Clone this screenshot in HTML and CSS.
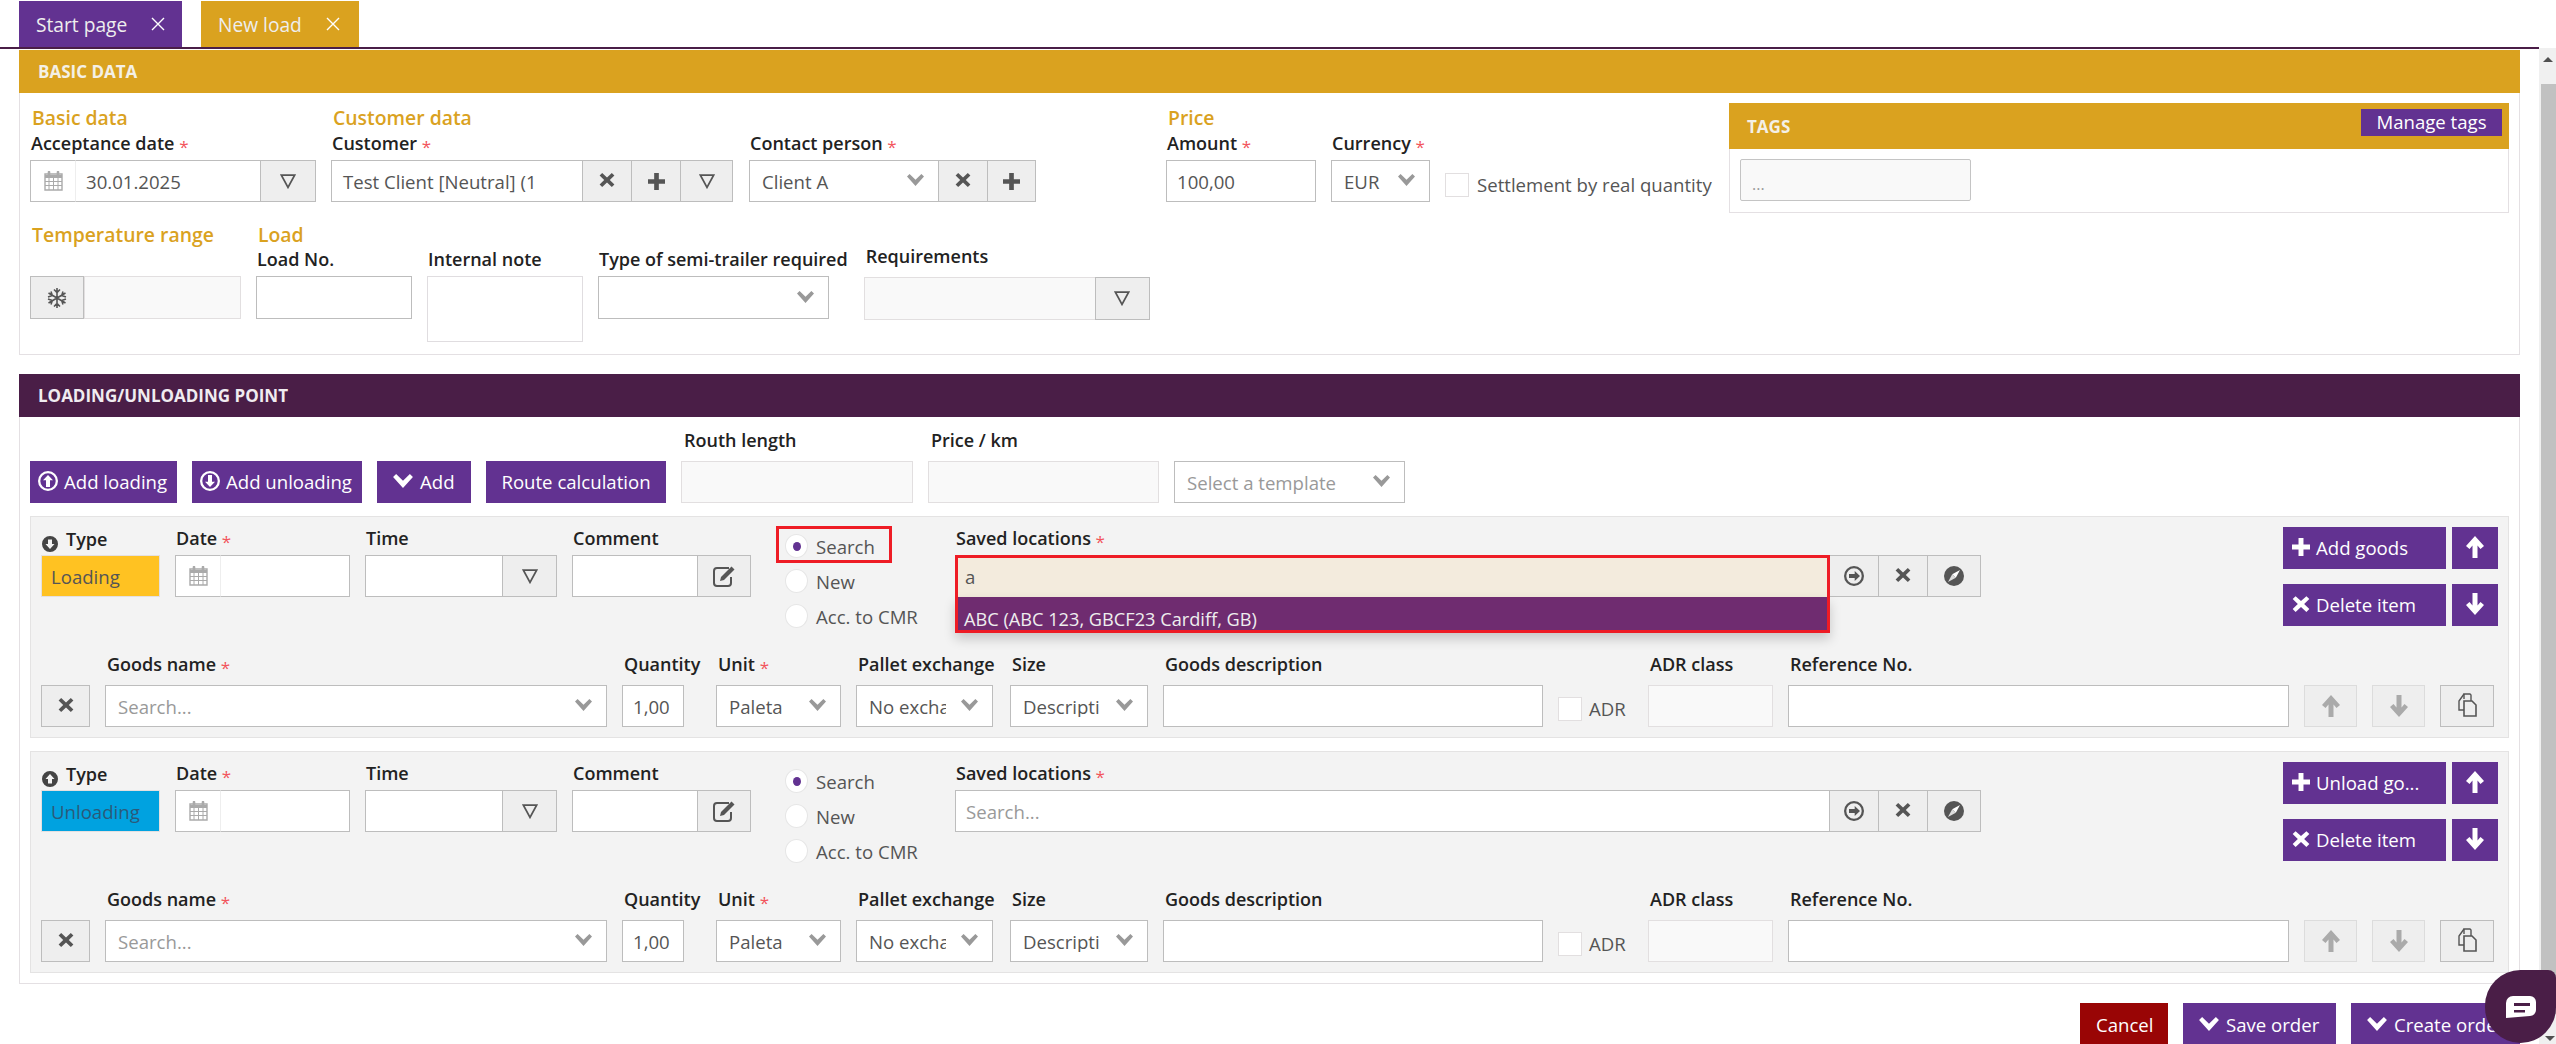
FILE: index.html
```html
<!DOCTYPE html>
<html lang="en">
<head>
<meta charset="utf-8">
<title>New load</title>
<link rel="stylesheet" href="styles.css">
</head>
<body>
<svg class="sprite" xmlns="http://www.w3.org/2000/svg">
  <symbol id="i-x" viewBox="0 0 16 16"><path d="M3.2 1 8 5.400 12.800 1 15.400 3.600 10.800 8 15.400 12.400 12.800 15 8 10.600 3.200 15 .6 12.400 5.200 8 .6 3.600Z" fill="currentColor"/></symbol>
  <symbol id="i-plus" viewBox="0 0 16 16"><path d="M5.800 0h4.400v5.800H16v4.400h-5.800V16H5.800v-5.800H0V5.800h5.800Z" fill="currentColor"/></symbol>
  <symbol id="i-tri" viewBox="0 0 16 15"><path d="M1.400 1.200h13.200L8 13.400Z" fill="none" stroke="currentColor" stroke-width="1.700"/></symbol>
  <symbol id="i-chev" viewBox="0 0 17 12"><path d="M0 2.600 2.600 0 8.500 5.800 14.400 0 17 2.600 8.500 12Z" fill="currentColor"/></symbol>
  <symbol id="i-tabx" viewBox="0 0 14 14"><path d="M1 1 13 13M13 1 1 13" fill="none" stroke="currentColor" stroke-width="1.400"/></symbol>
  <symbol id="i-cal" viewBox="0 0 19 20"><path d="M1 3h17v16H1Z" fill="#fff" stroke="#aaa" stroke-width="1.400"/><path d="M1 4h17v3H1Z" fill="#aaa"/><path d="M5 1v4M14 1v4" stroke="#aaa" stroke-width="2.600" stroke-linecap="round"/><path d="M1 10.500h17M1 14.500h17M5 7v12M9.500 7v12M14 7v12" stroke="#aaa" stroke-width="1"/></symbol>
  <symbol id="i-snow" viewBox="0 0 20 20"><path d="M10 0v20M1.500 5l17 10M18.500 5l-17 10M7 1.500 10 4.500 13 1.500M7 18.500 10 15.500 13 18.500M1 9l4.300-1.500L4 3.500M19 9l-4.300-1.500L16 3.500M1 11l4.300 1.500L4 16.500M19 11l-4.300 1.500L16 16.500" fill="none" stroke="#555" stroke-width="1.600"/></symbol>
  <symbol id="i-cup" viewBox="0 0 20 20"><path fill-rule="evenodd" d="M10 0a10 10 0 1 1 0 20 10 10 0 0 1 0-20Zm0 2.300a7.700 7.700 0 1 0 0 15.400 7.700 7.700 0 0 0 0-15.400ZM10 4l5 5.300h-3V16H8V9.300H5Z" fill="currentColor"/></symbol>
  <symbol id="i-cdown" viewBox="0 0 20 20"><path fill-rule="evenodd" d="M10 0a10 10 0 1 1 0 20 10 10 0 0 1 0-20Zm0 2.300a7.700 7.700 0 1 0 0 15.400 7.700 7.700 0 0 0 0-15.400ZM10 16l-5-5.300h3V4h4v6.700h3Z" fill="currentColor"/></symbol>
  <symbol id="i-sdown" viewBox="0 0 16 16"><path fill-rule="evenodd" d="M8 0a8 8 0 1 1 0 16A8 8 0 0 1 8 0Zm0 13 4.500-5H10V3.500H6V8H3.500Z" fill="currentColor"/></symbol>
  <symbol id="i-sup" viewBox="0 0 16 16"><path fill-rule="evenodd" d="M8 0a8 8 0 1 1 0 16A8 8 0 0 1 8 0Zm0 3L3.500 8H6v4.500h4V8h2.500Z" fill="currentColor"/></symbol>
  <symbol id="i-cright" viewBox="0 0 20 20"><path fill-rule="evenodd" d="M10 0a10 10 0 1 1 0 20 10 10 0 0 1 0-20Zm0 2.300a7.700 7.700 0 1 0 0 15.400 7.700 7.700 0 0 0 0-15.400ZM16 10l-5.300 5v-3H5V8h5.700V5Z" fill="currentColor"/></symbol>
  <symbol id="i-edit" viewBox="0 0 24 24"><path d="M17 4H5a3 3 0 0 0-3 3v12a3 3 0 0 0 3 3h11a3 3 0 0 0 3-3v-6" fill="none" stroke="#555" stroke-width="2"/><path d="M9 13 19.500 2.500l3 3L12 16l-4 1Z" fill="#555"/></symbol>
  <symbol id="i-compass" viewBox="0 0 20 20"><circle cx="10" cy="10" r="10" fill="#555"/><path d="M16 4 11.800 11.800 8.200 8.200Z" fill="#fff"/><path d="M4 16 8.200 8.200 11.800 11.800Z" fill="#ddd"/></symbol>
  <symbol id="i-up" viewBox="0 0 20 22"><path d="M10 0 19 10 15.500 13 12.500 9.500V22H7.500V9.500L4.500 13 1 10Z" fill="currentColor"/></symbol>
  <symbol id="i-down" viewBox="0 0 20 22"><path d="M10 22 19 12 15.500 9 12.500 12.500V0H7.500V12.500L4.500 9 1 12Z" fill="currentColor"/></symbol>
  <symbol id="i-copy" viewBox="0 0 20 24"><path d="M7 6V1h6l1 1v6" fill="none" stroke="#555" stroke-width="1.400"/><path d="M7 1 2 8v9h5" fill="none" stroke="#555" stroke-width="1.400"/><path d="M7 8h8l4 4v11H7Z" fill="#eee" stroke="#555" stroke-width="1.600"/></symbol>
  <symbol id="i-chat" viewBox="0 0 30 22"><path fill-rule="evenodd" d="M7 0h17a6 6 0 0 1 6 6v8a6 6 0 0 1-6 6v0l-24 2V7a7 7 0 0 1 7-7Zm1 7v3h16V7Zm0 7v2.500h11V14Z" fill="#fff"/></symbol>
</svg>

<div class="app">
  <main class="main">
    <nav class="tabs">
      <a class="tab tab-purple"><span>Start page</span><svg class="tabx"><use href="#i-tabx"/></svg></a>
      <a class="tab tab-gold"><span>New load</span><svg class="tabx"><use href="#i-tabx"/></svg></a>
    </nav>

    <section class="panel">
      <h2 class="phead gold">BASIC DATA</h2>
      <div class="basic">
        <div class="basic-left">
          <div class="row row-a">
            <div class="field">
              <div class="title">Basic data</div>
              <label class="label">Acceptance date <i>*</i></label>
              <div class="group w286">
                <span class="addon"><svg class="ic-cal"><use href="#i-cal"/></svg></span>
                <span class="input grow"><span class="val">30.01.2025</span></span>
                <span class="btn w56"><svg class="ic-tri"><use href="#i-tri"/></svg></span>
              </div>
            </div>
            <div class="field">
              <div class="title">Customer data</div>
              <label class="label">Customer <i>*</i></label>
              <div class="group w402">
                <span class="input grow lead"><span class="val">Test Client [Neutral] (1</span></span>
                <span class="btn w50"><svg class="ic-x"><use href="#i-x"/></svg></span>
                <span class="btn w50"><svg class="ic-plus"><use href="#i-plus"/></svg></span>
                <span class="btn w53"><svg class="ic-tri"><use href="#i-tri"/></svg></span>
              </div>
            </div>
            <div class="field">
              <label class="label">Contact person <i>*</i></label>
              <div class="group w287">
                <span class="select grow"><span class="val">Client A</span><svg class="ic-chev"><use href="#i-chev"/></svg></span>
                <span class="btn w50"><svg class="ic-x"><use href="#i-x"/></svg></span>
                <span class="btn w49"><svg class="ic-plus"><use href="#i-plus"/></svg></span>
              </div>
            </div>
            <div class="field ml-amount">
              <div class="title">Price</div>
              <label class="label">Amount <i>*</i></label>
              <span class="input w150"><span class="val">100,00</span></span>
            </div>
            <div class="field">
              <label class="label">Currency <i>*</i></label>
              <span class="select w99"><span class="val">EUR</span><svg class="ic-chev"><use href="#i-chev"/></svg></span>
            </div>
            <div class="check-field">
              <span class="check"></span><span class="check-text">Settlement by real quantity</span>
            </div>
          </div>

          <div class="row row-b">
            <div class="field">
              <div class="title">Temperature range</div>
              <label class="label">&nbsp;</label>
              <div class="group w211 h43">
                <span class="btn w54"><svg class="ic-snow"><use href="#i-snow"/></svg></span>
                <span class="input grow disabled"></span>
              </div>
            </div>
            <div class="field">
              <div class="title">Load</div>
              <label class="label">Load No.</label>
              <span class="input w156 h43"></span>
            </div>
            <div class="field no-title">
              <label class="label">Internal note</label>
              <span class="textarea"></span>
            </div>
            <div class="field no-title">
              <label class="label">Type of semi-trailer required</label>
              <span class="select w231 h43"><svg class="ic-chev"><use href="#i-chev"/></svg></span>
            </div>
            <div class="field req-field">
              <label class="label req-label">Requirements</label>
              <div class="group w286 h43">
                <span class="input grow disabled"></span>
                <span class="btn w55"><svg class="ic-tri"><use href="#i-tri"/></svg></span>
              </div>
            </div>
          </div>
        </div>

        <aside class="tags">
          <div class="tags-head"><span>TAGS</span><a class="manage">Manage tags</a></div>
          <div class="tags-body"><span class="tags-input">...</span></div>
        </aside>
      </div>
    </section>

    <section class="panel panel-2">
      <h2 class="phead plum">LOADING/UNLOADING POINT</h2>
      <div class="points">
        <div class="toolbar">
          <a class="pbtn w147"><svg class="ic-circ"><use href="#i-cup"/></svg>Add loading</a>
          <a class="pbtn w170"><svg class="ic-circ"><use href="#i-cdown"/></svg>Add unloading</a>
          <a class="pbtn w94"><svg class="ic-chev-w"><use href="#i-chev"/></svg>Add</a>
          <a class="pbtn w180 center">Route calculation</a>
          <div class="field">
            <label class="label">Routh length</label>
            <span class="input w232 disabled"></span>
          </div>
          <div class="field">
            <label class="label">Price / km</label>
            <span class="input w231 disabled"></span>
          </div>
          <span class="select w231 placeholder"><span class="val">Select a template</span><svg class="ic-chev"><use href="#i-chev"/></svg></span>
        </div>

        <article class="card">
          <div class="card-top">
            <div class="field w119f">
              <label class="label type-label"><svg class="ic-type"><use href="#i-sdown"/></svg>Type</label>
              <span class="typebox loading">Loading</span>
            </div>
            <div class="field">
              <label class="label">Date <i>*</i></label>
              <div class="group w175">
                <span class="addon"><svg class="ic-cal"><use href="#i-cal"/></svg></span>
                <span class="input grow"></span>
              </div>
            </div>
            <div class="field">
              <label class="label">Time</label>
              <div class="group w192">
                <span class="input grow"></span>
                <span class="btn w55"><svg class="ic-tri"><use href="#i-tri"/></svg></span>
              </div>
            </div>
            <div class="field">
              <label class="label">Comment</label>
              <div class="group w179">
                <span class="input grow"></span>
                <span class="btn w54"><svg class="ic-edit"><use href="#i-edit"/></svg></span>
              </div>
            </div>
            <div class="radios">
              <div class="radio-row hl"><span class="radio on"></span>Search</div>
              <div class="radio-row"><span class="radio"></span>New</div>
              <div class="radio-row"><span class="radio"></span>Acc. to CMR</div>
            </div>
            <div class="field">
              <label class="label lbl-loc">Saved locations <i>*</i></label>
              <div class="group w1029">
                <div class="combo">
                  <span class="input fill active"><span class="val">a</span></span>
                  <div class="menu">ABC (ABC 123, GBCF23 Cardiff, GB)</div>
                  <div class="redbox"></div>
                </div>
                <span class="btn w50"><svg class="ic-circ2"><use href="#i-cright"/></svg></span>
                <span class="btn w50"><svg class="ic-x"><use href="#i-x"/></svg></span>
                <span class="btn w54"><svg class="ic-compass"><use href="#i-compass"/></svg></span>
              </div>
            </div>
            <div class="side">
              <div class="side-row">
                <a class="pbtn w163 h42"><svg class="ic-plus-w"><use href="#i-plus"/></svg>Add goods</a>
                <a class="pbtn w46 h42 center"><svg class="ic-arrow"><use href="#i-up"/></svg></a>
              </div>
              <div class="side-row">
                <a class="pbtn w163 h43"><svg class="ic-plus-w"><use href="#i-x"/></svg>Delete item</a>
                <a class="pbtn w46 h43 center"><svg class="ic-arrow"><use href="#i-down"/></svg></a>
              </div>
            </div>
          </div>
          <div class="card-bottom">
            <span class="btn w49 solo"><svg class="ic-x"><use href="#i-x"/></svg></span>
            <div class="field">
              <label class="label lp">Goods name <i>*</i></label>
              <span class="select w502 placeholder"><span class="val">Search...</span><svg class="ic-chev"><use href="#i-chev"/></svg></span>
            </div>
            <div class="field w79f">
              <label class="label lp">Quantity</label>
              <span class="input w62"><span class="val">1,00</span></span>
            </div>
            <div class="field">
              <label class="label lp">Unit <i>*</i></label>
              <span class="select w125"><span class="val">Paleta</span><svg class="ic-chev"><use href="#i-chev"/></svg></span>
            </div>
            <div class="field w139f">
              <label class="label lp">Pallet exchange</label>
              <span class="select w137"><span class="val clip">No exchange</span><svg class="ic-chev"><use href="#i-chev"/></svg></span>
            </div>
            <div class="field">
              <label class="label lp">Size</label>
              <span class="select w138"><span class="val clip">Description</span><svg class="ic-chev"><use href="#i-chev"/></svg></span>
            </div>
            <div class="field">
              <label class="label lp">Goods description</label>
              <span class="input w380"></span>
            </div>
            <div class="adr"><span class="check"></span><span class="check-text">ADR</span></div>
            <div class="field">
              <label class="label lp">ADR class</label>
              <span class="input w125 disabled"></span>
            </div>
            <div class="field">
              <label class="label lp">Reference No.</label>
              <span class="input w501"></span>
            </div>
            <span class="btn w53 solo dim"><svg class="ic-arrow"><use href="#i-up"/></svg></span>
            <span class="btn w53 solo dim"><svg class="ic-arrow"><use href="#i-down"/></svg></span>
            <span class="btn w54 solo"><svg class="ic-copy"><use href="#i-copy"/></svg></span>
          </div>
        </article>

        <article class="card">
          <div class="card-top">
            <div class="field w119f">
              <label class="label type-label"><svg class="ic-type"><use href="#i-sup"/></svg>Type</label>
              <span class="typebox unloading">Unloading</span>
            </div>
            <div class="field">
              <label class="label">Date <i>*</i></label>
              <div class="group w175">
                <span class="addon"><svg class="ic-cal"><use href="#i-cal"/></svg></span>
                <span class="input grow"></span>
              </div>
            </div>
            <div class="field">
              <label class="label">Time</label>
              <div class="group w192">
                <span class="input grow"></span>
                <span class="btn w55"><svg class="ic-tri"><use href="#i-tri"/></svg></span>
              </div>
            </div>
            <div class="field">
              <label class="label">Comment</label>
              <div class="group w179">
                <span class="input grow"></span>
                <span class="btn w54"><svg class="ic-edit"><use href="#i-edit"/></svg></span>
              </div>
            </div>
            <div class="radios">
              <div class="radio-row"><span class="radio on"></span>Search</div>
              <div class="radio-row"><span class="radio"></span>New</div>
              <div class="radio-row"><span class="radio"></span>Acc. to CMR</div>
            </div>
            <div class="field">
              <label class="label lbl-loc">Saved locations <i>*</i></label>
              <div class="group w1029">
                <div class="combo">
                  <span class="input fill placeholder"><span class="val">Search...</span></span>
                </div>
                <span class="btn w50"><svg class="ic-circ2"><use href="#i-cright"/></svg></span>
                <span class="btn w50"><svg class="ic-x"><use href="#i-x"/></svg></span>
                <span class="btn w54"><svg class="ic-compass"><use href="#i-compass"/></svg></span>
              </div>
            </div>
            <div class="side">
              <div class="side-row">
                <a class="pbtn w163 h42"><svg class="ic-plus-w"><use href="#i-plus"/></svg>Unload go...</a>
                <a class="pbtn w46 h42 center"><svg class="ic-arrow"><use href="#i-up"/></svg></a>
              </div>
              <div class="side-row">
                <a class="pbtn w163 h43"><svg class="ic-plus-w"><use href="#i-x"/></svg>Delete item</a>
                <a class="pbtn w46 h43 center"><svg class="ic-arrow"><use href="#i-down"/></svg></a>
              </div>
            </div>
          </div>
          <div class="card-bottom">
            <span class="btn w49 solo"><svg class="ic-x"><use href="#i-x"/></svg></span>
            <div class="field">
              <label class="label lp">Goods name <i>*</i></label>
              <span class="select w502 placeholder"><span class="val">Search...</span><svg class="ic-chev"><use href="#i-chev"/></svg></span>
            </div>
            <div class="field w79f">
              <label class="label lp">Quantity</label>
              <span class="input w62"><span class="val">1,00</span></span>
            </div>
            <div class="field">
              <label class="label lp">Unit <i>*</i></label>
              <span class="select w125"><span class="val">Paleta</span><svg class="ic-chev"><use href="#i-chev"/></svg></span>
            </div>
            <div class="field w139f">
              <label class="label lp">Pallet exchange</label>
              <span class="select w137"><span class="val clip">No exchange</span><svg class="ic-chev"><use href="#i-chev"/></svg></span>
            </div>
            <div class="field">
              <label class="label lp">Size</label>
              <span class="select w138"><span class="val clip">Description</span><svg class="ic-chev"><use href="#i-chev"/></svg></span>
            </div>
            <div class="field">
              <label class="label lp">Goods description</label>
              <span class="input w380"></span>
            </div>
            <div class="adr"><span class="check"></span><span class="check-text">ADR</span></div>
            <div class="field">
              <label class="label lp">ADR class</label>
              <span class="input w125 disabled"></span>
            </div>
            <div class="field">
              <label class="label lp">Reference No.</label>
              <span class="input w501"></span>
            </div>
            <span class="btn w53 solo dim"><svg class="ic-arrow"><use href="#i-up"/></svg></span>
            <span class="btn w53 solo dim"><svg class="ic-arrow"><use href="#i-down"/></svg></span>
            <span class="btn w54 solo"><svg class="ic-copy"><use href="#i-copy"/></svg></span>
          </div>
        </article>
      </div>
    </section>

    <footer class="actions">
      <a class="abtn cancel">Cancel</a>
      <a class="abtn save"><svg class="ic-chev-w"><use href="#i-chev"/></svg>Save order</a>
      <a class="abtn create"><svg class="ic-chev-w"><use href="#i-chev"/></svg>Create order</a>
    </footer>
  </main>

  <div class="scrollbar">
    <span class="sb-up"></span>
    <span class="sb-thumb"></span>
    <span class="sb-down"></span>
  </div>
  <div class="chat"><svg class="ic-chat"><use href="#i-chat"/></svg></div>
</div>
</body>
</html>
```

FILE: styles.css
```css
* { box-sizing: border-box; }
html, body { margin: 0; height: 100%; overflow: hidden; background: #fff; }
body { font-family: "Open Sans", "Noto Sans", sans-serif; font-size: 18.6px; color: #555; }
.sprite { position: absolute; width: 0; height: 0; }
svg { display: block; flex: none; }
a { cursor: pointer; }

.app { display: flex; height: 1044px; position: relative; overflow: hidden; }
.main { flex: 1; min-width: 0; padding: 0 19px 0 19px; position: relative; }

/* tabs */
.tabs { display: flex; gap: 19px; height: 49px; padding-top: 1px; margin: 0 -19px; padding-left: 19px; border-bottom: 2px solid #4a1e47; }
.tab { display: flex; align-items: center; height: 46px; padding-left: 17px; color: #eee; font-size: 19.2px; }
.tab-purple { width: 163px; background: #623291; }
.tab-gold { width: 158px; background: #daa21f; }
.tabx { width: 14px; height: 14px; margin-left: 24px; color: #fff; }

/* panels */
.panel { border: 1px solid #e4e0e3; border-top: 0; margin-top: 1px; }
.panel-2 { margin-top: 19px; }
.phead { margin: 0 -1px; height: 43px; padding-left: 19px; font-size: 17px; font-weight: 700; line-height: 43px; color: #f4f0e6; }
.gold { background: #daa21f; }
.plum { background: #4a1e47; height: 43px; color: #f0ecf0; }

.basic { display: flex; padding: 0 10px 12px; }
.basic-left { flex: 1; min-width: 0; }
.tags { width: 780px; height: 110px; margin-top: 10px; border: 1px solid #e4e0e3; border-top: 0; align-self: flex-start; flex: none; }
.tags-head { display: flex; align-items: center; justify-content: space-between; height: 46px; margin: 0 -1px; padding: 0 7px 0 18px; background: #daa21f; color: #f4f0e6; font-size: 17px; font-weight: 700; }
.manage { display: block; height: 27px; width: 141px; text-align: center; background: #623291; color: #fff; font-weight: 400; font-size: 18.6px; line-height: 25px; margin-top: -7px; }
.tags-body { padding: 10px; }
.tags-input { display: block; width: 231px; height: 42px; background: #f9f9f9; border: 1px solid #c4c4c4; border-radius: 2px; color: #999; padding: 14px 11px; line-height: 20px; font-size: 16px; }

/* rows */
.row { display: flex; gap: 15px; }
.row-a { align-items: flex-end; padding-top: 15px; }
.row-a .w402 { margin-right: 1px; }
.row-b { align-items: flex-start; padding-top: 23px; }
.field { display: flex; flex-direction: column; flex: none; }
.title { font-size: 19.4px; line-height: 20px; font-weight: 600; color: #daa21f; margin: 0 0 6px 2px; white-space: nowrap; }
.row-b .title { margin-bottom: 5px; }
.label { display: block; height: 20px; line-height: 18px; margin: 0 0 6px 1px; font-size: 18px; font-weight: 600; color: #222; white-space: nowrap; }
.label i { font-style: normal; font-weight: 400; font-size: 17px; color: #f2545b; position: relative; top: 3px; }
.lp { margin: 0 0 10px 2px; }
.ml-amount { margin-left: 115px; }
.no-title { margin-top: 25px; }
.req-field { margin: 22px 0 0 1px; }
.req-label { margin-bottom: 10px; margin-left: 2px; }
.lbl-loc { margin-bottom: 7px; height: 19px; }

/* controls */
.group { display: flex; height: 42px; border: 0; flex: none; }
.input, .select, .btn, .addon { display: flex; align-items: center; height: 100%; border: 1px solid #bdbdbd; background: #fff; }
.input, .select { height: 42px; flex: none; padding: 0 10px; color: #555; white-space: nowrap; }
.group .input, .group .select { height: 100%; }
.grow { flex: 1; min-width: 0; }
.lead { padding-left: 11px; }
.select { justify-content: space-between; padding: 0 14px 0 12px; }
.select .ic-chev { margin-left: auto; }
.val { line-height: 20px; padding-top: 1px; }
.clip { display: block; overflow: hidden; width: 77px; }
.placeholder .val { color: #999; }
.disabled { background: #f9f9f9; border-color: #e2dfe0; }
.fill { width: 100%; }
.textarea { display: block; width: 156px; height: 66px; background: #fff; border: 1px solid #e0dde0; }
.btn { flex: none; justify-content: center; background: #eee; color: #555; margin-left: -1px; }
.group > .btn:first-child { margin-left: 0; }
.addon { width: 46px; flex: none; justify-content: center; border-right: 1px solid #eee; }
.group .addon + .input { border-left: 0; }
.solo { height: 42px; margin-left: 0; }
.dim { color: #aaa; border-color: #dcdcdc; }

.h43 { height: 43px; }
.w49 { width: 49px; } .w50 { width: 50px; } .w53 { width: 53px; } .w54 { width: 54px; } .w55 { width: 55px; } .w56 { width: 56px; }
.w62 { width: 62px; } .w99 { width: 99px; } .w125 { width: 125px; } .w137 { width: 137px; } .w138 { width: 138px; }
.w150 { width: 150px; } .w156 { width: 156px; } .w175 { width: 175px; } .w179 { width: 179px; } .w192 { width: 192px; }
.w211 { width: 211px; } .w231 { width: 231px; } .w232 { width: 232px; } .w286 { width: 286px; } .w287 { width: 287px; }
.w380 { width: 380px; } .w402 { width: 402px; } .w501 { width: 501px; } .w502 { width: 502px; } .w1029 { width: 1029px; }
.w119f { width: 119px; } .w79f { width: 79px; } .w139f { width: 139px; }

/* icons */
.ic-x { width: 16px; height: 16px; margin-top: -3px; }
.ic-plus { width: 17px; height: 17px; }
.ic-tri { width: 16px; height: 15px; color: #555; }
.ic-chev { width: 17px; height: 12px; color: #999; margin-top: -2px; }
.ic-cal { width: 19px; height: 20px; }
.ic-snow { width: 20px; height: 20px; }
.ic-edit { width: 24px; height: 24px; }
.ic-circ { width: 20px; height: 20px; margin-right: 6px; color: #fff; }
.ic-circ2 { width: 20px; height: 20px; color: #555; }
.ic-compass { width: 20px; height: 20px; }
.ic-chev-w { width: 20px; height: 14px; color: #fff; margin-right: 7px; }
.ic-plus-w { width: 18px; height: 18px; color: #fff; margin-right: 6px; }
.ic-arrow { width: 20px; height: 22px; }
.ic-copy { width: 20px; height: 24px; margin-top: -3px; }
.ic-type { width: 16px; height: 16px; color: #444; margin: 0 8px 0 0; position: relative; top: 5px; }
.ic-chat { width: 30px; height: 22px; }

/* check */
.check { display: block; width: 24px; height: 24px; background: #fff; border: 1px solid #e2dfe0; flex: none; }
.check-field { display: flex; align-items: center; gap: 8px; margin-bottom: 5px; white-space: nowrap; }
.check-text { color: #555; }

/* panel 2 */
.points { padding: 0 10px 10px; }
.toolbar { display: flex; align-items: flex-end; gap: 15px; padding-top: 14px; }
.toolbar .field .label { margin: 0 0 10px 3px; }
.pbtn { display: flex; align-items: center; height: 42px; flex: none; background: #623291; color: #fff; padding: 0 0 2px 8px; white-space: nowrap; }
.center { justify-content: center; padding-left: 0; }
.w147 { width: 147px; } .w170 { width: 170px; } .w94 { width: 94px; } .w180 { width: 180px; }
.w163 { width: 163px; } .w46 { width: 46px; }
.toolbar .w94 { padding-left: 16px; }

.card { position: relative; margin-top: 13px; background: #f3f3f3; border: 1px solid #e4e3e3; padding: 12px 10px 10px 10px; height: 222px; }
.card-top { display: flex; gap: 15px; height: 126px; align-items: flex-start; }
.card-bottom { display: flex; gap: 15px; align-items: flex-end; }
.type-label { display: flex; align-items: center; margin-left: 1px; }
.typebox { display: flex; align-items: center; height: 42px; padding-left: 9px; border: 1px solid #e4e0e0; }
.loading { background: #ffc222; color: #555; }
.unloading { background: #00a2e0; color: #2b5a7a; }

.radios { width: 155px; margin-left: 19px; padding-top: 5px; display: flex; flex-direction: column; gap: 11px; flex: none; }
.radio-row { position: relative; display: flex; align-items: center; gap: 8px; height: 24px; color: #555; white-space: nowrap; }
.radio { position: relative; display: block; width: 23px; height: 24px; border-radius: 50%; background: #fff; border: 1px solid #e6e6e6; flex: none; }
.radio.on::after { content: ""; position: absolute; left: 7px; top: 7px; width: 8px; height: 9px; border-radius: 50%; background: #623291; }
.hl::before { content: ""; box-sizing: border-box; position: absolute; left: -9px; top: -8px; width: 116px; height: 37px; border: 3px solid #ee1c25; }

.combo { position: relative; width: 875px; flex: none; height: 42px; }
.combo .input { height: 42px; }
.active { background: #f3ebdd; border: 0; }
.menu { position: absolute; top: 42px; left: 0; right: 0; height: 36px; padding: 10px 9px 0; background: #6f2c70; color: #eee; line-height: 24px; font-size: 18.2px; box-shadow: 0 6px 12px rgba(0,0,0,.18); white-space: nowrap; overflow: hidden; }
.redbox { position: absolute; top: 0; left: 0; right: 0; height: 78px; border: 3px solid #ee1c25; pointer-events: none; }

.side { margin-left: auto; display: flex; flex-direction: column; gap: 15px; margin-top: -2px; }
.side-row { display: flex; gap: 6px; }
.h42 { height: 42px; }
.side .pbtn:not(.center) { padding-left: 9px; }

.adr { display: flex; align-items: center; gap: 7px; width: 75px; height: 42px; flex: none; padding-top: 5px; }

/* footer */
.actions { display: flex; justify-content: flex-end; gap: 15px; margin-top: 19px; }
.abtn { display: flex; align-items: center; height: 42px; color: #fff; white-space: nowrap; padding-left: 16px; }
.cancel { width: 88px; background: #990505; }
.save { width: 153px; background: #623291; }
.create { width: 169px; background: #623291; overflow: hidden; }

/* scrollbar */
.scrollbar { width: 17px; flex: none; margin-top: 48px; background: #f0f0f0; position: relative; display: flex; flex-direction: column; align-items: flex-end; }
.sb-up { display: block; width: 16px; height: 36px; position: relative; }
.sb-up::after { content: ""; position: absolute; left: 3px; top: 9px; border: 5px solid transparent; border-top: 0; border-bottom: 5px solid #505050; }
.sb-thumb { display: block; width: 15px; flex: 1; background: #c1c1c1; margin-bottom: 30px; }
.sb-down { position: absolute; right: 1px; bottom: 3px; border: 5px solid transparent; border-bottom: 0; border-top: 5px solid #505050; }

/* chat */
.chat { position: absolute; left: 2485px; top: 970px; width: 71px; height: 73px; background: #4a1e47; border-radius: 36px 8px 36px 36px; display: flex; align-items: center; justify-content: center; }
```
